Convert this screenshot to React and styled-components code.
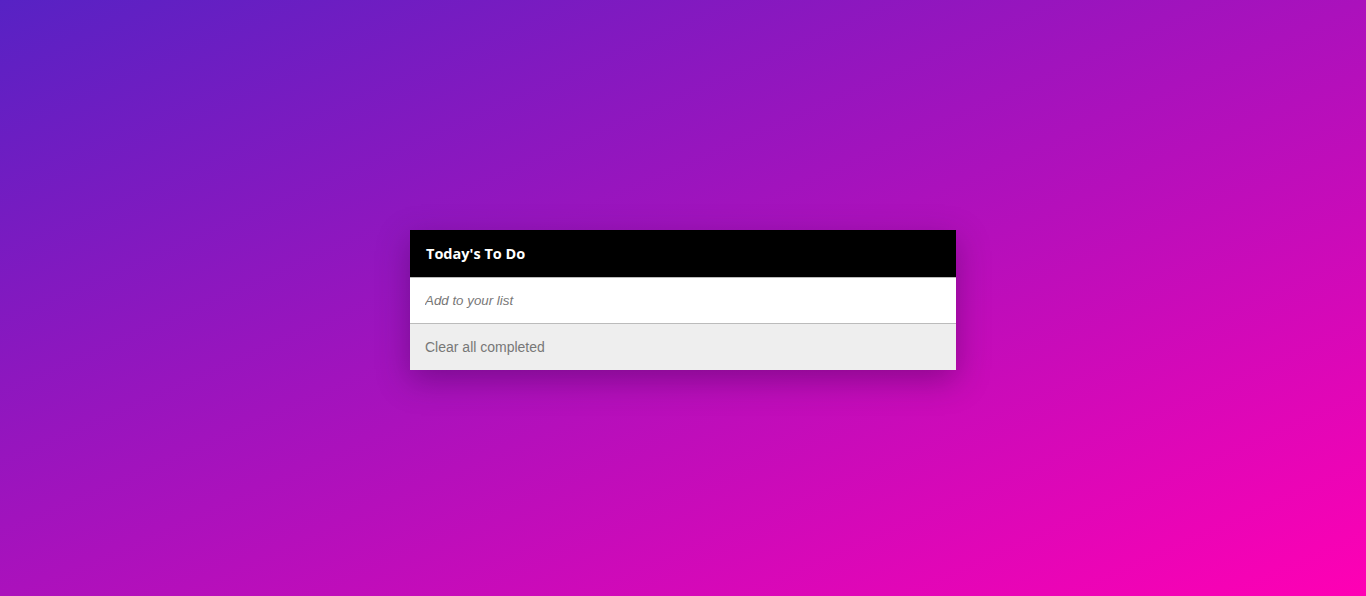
import React, { useState } from "react";
import styled, { createGlobalStyle } from "styled-components";

const Global = createGlobalStyle`
  * { box-sizing: border-box; }
  html, body { margin: 0; padding: 0; height: 100%; }
  body {
    font-family: "Liberation Sans", Arial, sans-serif;
    background: linear-gradient(to bottom right, #5722c4 0%, #ff00b4 100%);
    background-attachment: fixed;
    min-height: 100vh;
  }
`;

const Page = styled.div`
  min-height: 100vh;
  display: flex;
  align-items: center;
  justify-content: center;
  padding-top: 4px;
`;

const Card = styled.div`
  width: 546px;
  background: #fff;
  box-shadow: 0 10px 30px rgba(40, 0, 60, 0.35);
  display: flex;
  flex-direction: column;
`;

const Header = styled.h1`
  margin: 0;
  height: 48px;
  background: #000;
  color: #fff;
  font-family: "Open Sans", "Noto Sans", sans-serif;
  font-size: 14.5px;
  font-weight: 700;
  display: flex;
  align-items: center;
  padding: 0 16px;
  border-bottom: 1px solid #bbb;
`;

const Input = styled.input`
  height: 46px;
  border: none;
  border-bottom: 1px solid #bbb;
  padding: 0 15px;
  font-family: "Liberation Sans", Arial, sans-serif;
  font-size: 13.333px;
  font-style: italic;
  outline: none;
  background: #fff;
  &::placeholder { color: #777; }
`;

const Footer = styled.button`
  height: 46px;
  border: none;
  background: #eee;
  color: #777;
  text-align: left;
  padding: 0 15px;
  font-family: "Liberation Sans", Arial, sans-serif;
  font-size: 14px;
  cursor: pointer;
`;

export default function App() {
  const [value, setValue] = useState("");
  return (
    <>
      <Global />
      <Page>
        <Card>
          <Header>Today's To Do</Header>
          <Input
            placeholder="Add to your list"
            value={value}
            onChange={(e) => setValue(e.target.value)}
          />
          <Footer>Clear all completed</Footer>
        </Card>
      </Page>
    </>
  );
}
